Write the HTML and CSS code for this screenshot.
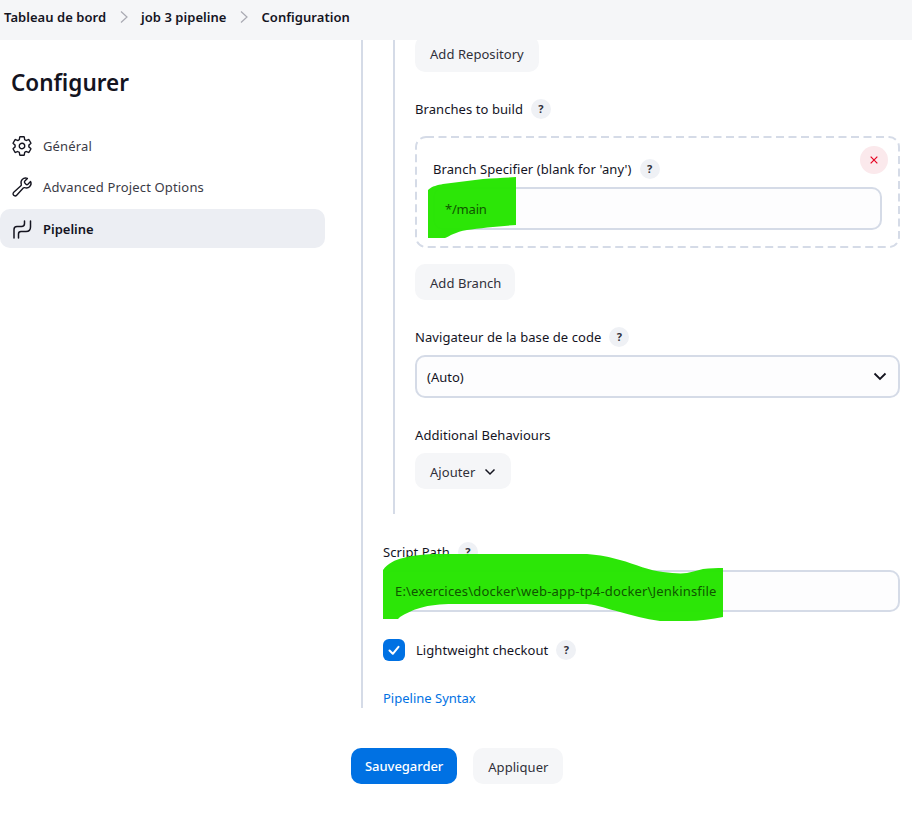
FILE: index.html
```html
<!DOCTYPE html>
<html lang="fr">
<head>
<meta charset="utf-8">
<title>Configuration</title>
<link rel="stylesheet" href="styles.css">
</head>
<body>
<header class="crumbs">
  <a class="crumb">Tableau de bord</a>
  <svg class="sep" viewBox="0 0 10 14"><path d="M2 1.5 8 7l-6 5.5"/></svg>
  <a class="crumb">job 3 pipeline</a>
  <svg class="sep" viewBox="0 0 10 14"><path d="M2 1.5 8 7l-6 5.500"/></svg>
  <a class="crumb">Configuration</a>
</header>
<div class="page">
  <aside class="side">
    <h1 class="title">Configurer</h1>
    <nav class="nav">
      <a class="nav-item">
        <svg class="nav-icon" viewBox="0 0 512 512"><path d="M262.29 192.31a64 64 0 1057.4 57.4 64.13 64.13 0 00-57.4-57.4zM416.39 256a154.34 154.34 0 01-1.53 20.79l45.21 35.46a10.81 10.81 0 012.45 13.75l-42.77 74a10.81 10.81 0 01-13.14 4.59l-44.9-18.08a16.11 16.11 0 00-15.17 1.75A164.48 164.48 0 01325 400.8a15.94 15.94 0 00-8.82 12.14l-6.73 47.89a11.08 11.08 0 01-10.68 9.17h-85.54a11.11 11.11 0 01-10.69-8.87l-6.72-47.82a16.07 16.07 0 00-9-12.22 155.3 155.3 0 01-21.46-12.57 16 16 0 00-15.11-1.71l-44.89 18.07a10.81 10.81 0 01-13.14-4.58l-42.77-74a10.8 10.8 0 012.45-13.75l38.21-30a16.05 16.05 0 006-14.08c-.36-4.17-.58-8.33-.58-12.5s.21-8.27.58-12.35a16 16 0 00-6.07-13.94l-38.19-30A10.81 10.81 0 0149.48 186l42.77-74a10.81 10.81 0 0113.14-4.59l44.9 18.08a16.11 16.11 0 0015.17-1.75A164.48 164.48 0 01187 111.2a15.94 15.94 0 008.82-12.14l6.73-47.89A11.08 11.08 0 01213.23 42h85.54a11.11 11.11 0 0110.69 8.87l6.72 47.82a16.07 16.07 0 009 12.22 155.3 155.3 0 0121.46 12.57 16 16 0 0015.11 1.71l44.89-18.07a10.81 10.81 0 0113.14 4.58l42.77 74a10.8 10.8 0 01-2.45 13.75l-38.21 30a16.05 16.05 0 00-6.05 14.08c.33 4.14.55 8.3.55 12.47z"/></svg>
        Général
      </a>
      <a class="nav-item">
        <svg class="nav-icon" viewBox="0 0 512 512"><path d="M393.87 190a32.1 32.1 0 01-45.25 0l-26.57-26.57a32.09 32.09 0 010-45.26L382.19 58a1 1 0 00-.3-1.64c-38.82-16.64-89.15-8.16-121.11 23.57-30.58 30.35-32.32 76-21.12 115.84a31.93 31.93 0 01-9.06 32.08L64 380a48.17 48.17 0 1068 68l153.86-167a31.93 31.93 0 0131.6-9.13c39.54 10.59 84.54 8.6 114.72-21.19 32.49-32 39.5-88.56 23.75-120.93a1 1 0 00-1.6-.26z"/></svg>
        Advanced Project Options
      </a>
      <a class="nav-item nav-active">
        <svg class="nav-icon nav-icon-pipe" viewBox="0 0 22 22"><path d="M3 20V11.500q0-3 3-3h4.500q3 0 3-3V3"/><path d="M7.500 20v-4q0-2.500 2.500-2.500h5q4.500 0 4.500-4.500V3"/></svg>
        Pipeline
      </a>
    </nav>
  </aside>
  <main class="main">
    <section class="scm">
      <button class="btn btn-top">Add Repository</button>
      <div class="label-row gap-top"><span>Branches to build</span><span class="help">?</span></div>
      <div class="repeat">
        <svg class="repeat-edge" viewBox="0 0 485 112" aria-hidden="true"><rect x="1" y="1" width="483" height="110" rx="10"/></svg>
        <button class="remove" aria-label="Supprimer"><svg viewBox="0 0 12 12"><path d="M2 2l8 8M10 2l-8 8"/></svg></button>
        <div class="label-row"><span>Branch Specifier (blank for 'any')</span><span class="help">?</span></div>
        <div class="input"><span class="marked marked-short">*/main</span></div>
      </div>
      <button class="btn btn-after btn-low">Add Branch</button>
      <div class="label-row gap-top"><span>Navigateur de la base de code</span><span class="help">?</span></div>
      <div class="input select">(Auto)<svg class="select-arrow" viewBox="0 0 14 9"><path d="M1.500 1.500 7 7l5.500-5.500"/></svg></div>
      <div class="label-row gap-top"><span>Additional Behaviours</span></div>
      <button class="btn btn-add btn-low">Ajouter<svg class="add-arrow" viewBox="0 0 12 8"><path d="M1.500 1.500 6 6l4.500-4.500"/></svg></button>
    </section>
    <div class="label-row script-label"><span>Script Path</span><span class="help">?</span></div>
    <div class="input script-input"><span class="marked marked-long">E:\exercices\docker\web-app-tp4-docker\Jenkinsfile</span></div>
    <label class="check-row">
      <span class="check"><svg viewBox="0 0 22 22"><path d="M6.500 11.500 9.800 14.800 15.500 7.800"/></svg></span>
      <span>Lightweight checkout</span><span class="help">?</span>
    </label>
    <a class="link">Pipeline Syntax</a>
  </main>
</div>
<footer class="actions">
  <button class="btn btn-primary">Sauvegarder</button>
  <button class="btn btn-low">Appliquer</button>
</footer>
<svg class="marker" viewBox="0 0 912 822" aria-hidden="true">
  <path d="M428 190C432 186 438 185 443 184L483 179C495 178 505 178 516 177V225C500 226 480 228 467 230C455 232 450 236 445 238H428Z"/>
  <path d="M383 570C388 563 395 560 403 558C415 555 425 554 437 554H587C600 555 610 557 620 560C635 564 650 571 663 572C672 573 680 574 687 573C693 572 698 570 703 569C710 568 717 568 723 568V617C712 619 700 621 687 621H660C645 619 632 615 620 612C608 609 598 605 587 604H453C440 604 430 605 420 608C412 610 405 614 400 617L398 619H383Z"/>
</svg>
</body>
</html>
```
FILE: styles.css
```css
* { box-sizing: border-box; }
html, body { margin: 0; padding: 0; }
body {
  position: relative;
  height: 822px;
  overflow: hidden;
  background: #fff;
  color: #14141f;
  font-family: "Noto Sans", "Open Sans", sans-serif;
  font-size: 13px;
  line-height: 20px;
}
.crumbs {
  position: relative;
  z-index: 1;
  display: flex;
  align-items: center;
  height: 40px;
  padding: 0 0 6px 4px;
  background: #f5f6f8;
  font-weight: 600;
  letter-spacing: .04px;
}
.sep { width: 10px; height: 14px; margin: 0 12.500px; fill: none; stroke: #a9aab3; stroke-width: 1.2; }
.page { display: flex; }
.side { width: 361px; flex: none; }
.title { margin: 28px 0 0 11px; font-size: 22.5px; line-height: 30px; font-weight: 600; }
.nav { margin-top: 28px; width: 325px; display: flex; flex-direction: column; gap: 2.5px; }
.nav-item { display: flex; align-items: center; gap: 10px; height: 39px; padding-left: 11px; color: #3b3b46; letter-spacing: .15px; }
.nav-active { background: #eceef3; border-radius: 10px; font-weight: 600; color: #14141f; letter-spacing: 0; }
.nav-icon { width: 22px; height: 22px; flex: none; fill: none; stroke: #14141f; stroke-width: 32; stroke-linecap: round; stroke-linejoin: round; }
.nav-icon-pipe { stroke-width: 1.5; }
.main { flex: 1; height: 668px; border-left: 2px solid #d5dbe7; padding: 0 12px 0 20px; }
.scm { border-left: 2px solid #d5dbe7; margin-left: 10px; padding: 0 0 25px 20px; }
.label-row { display: flex; align-items: center; gap: 8px; height: 20px; letter-spacing: .07px; }
.gap-top { margin-top: 27px; }
.help { display: flex; align-items: center; justify-content: center; width: 20px; height: 20px; border-radius: 50%; background: #eff1f5; font-size: 11px; font-weight: 700; color: #30303a; letter-spacing: 0; }
.btn { display: inline-flex; align-items: center; height: 36px; padding: 0 15px; border: 0; border-radius: 10px; background: #f5f6f8; color: #30303a; font: inherit; letter-spacing: .05px; }
.btn-low { padding-top: 2px; }
.btn-top { margin-top: -4px; position: relative; }
.btn-after { display: flex; margin-top: 16px; padding-right: 14px; }
.btn-add { display: flex; margin-top: 8px; gap: 9px; }
.add-arrow { width: 12px; height: 8px; fill: none; stroke: #14141f; stroke-width: 1.5; }
.repeat { position: relative; margin-top: 17px; height: 112px; padding: 23px 18px 0; }
.repeat-edge { position: absolute; left: 0; top: 0; width: 100%; height: 100%; fill: none; stroke: #d5dbe7; stroke-width: 2; stroke-dasharray: 8 4.500; }
.remove { position: absolute; top: 10px; right: 12px; display: flex; align-items: center; justify-content: center; width: 28px; height: 28px; padding: 0; border: 0; border-radius: 50%; background: #fbe9ec; }
.remove svg { width: 10px; height: 10px; fill: none; stroke: #e6001f; stroke-width: 1.4; }
.input { position: relative; display: flex; align-items: center; height: 43px; margin-top: 8px; padding: 0 10px; border: 2px solid #d5dbe7; border-radius: 10px; background: #fdfdfe; }
.select { justify-content: space-between; padding-right: 11px; }
.select-arrow { width: 14px; height: 9px; fill: none; stroke: #14141f; stroke-width: 1.8; }
.script-label { margin-top: 28px; }
.script-input { height: 42px; }
.check-row { display: flex; align-items: center; gap: 11px; margin-top: 27px; height: 22px; letter-spacing: .05px; }
.check-row .help { margin-left: -3px; }
.check { width: 22px; height: 22px; border-radius: 6px; background: #0071e3; }
.check svg { display: block; width: 22px; height: 22px; fill: none; stroke: #fff; stroke-width: 2; stroke-linecap: round; stroke-linejoin: round; }
.link { display: block; margin-top: 27px; color: #0071e3; }
.actions { display: flex; gap: 16px; margin-top: 40px; padding-left: 351px; }
.btn-primary { padding: 0 14px; background: #0071e3; color: #fff; font-weight: 500; letter-spacing: -.05px; }
.marker { position: absolute; left: 0; top: 0; width: 912px; height: 822px; z-index: 2; pointer-events: none; opacity: .97; }
.marker path { fill: #26e600; }
.marked { position: relative; z-index: 3; color: #0f5500; }
.marked-short { letter-spacing: -.2px; }
.marked-long { letter-spacing: .18px; }
```
